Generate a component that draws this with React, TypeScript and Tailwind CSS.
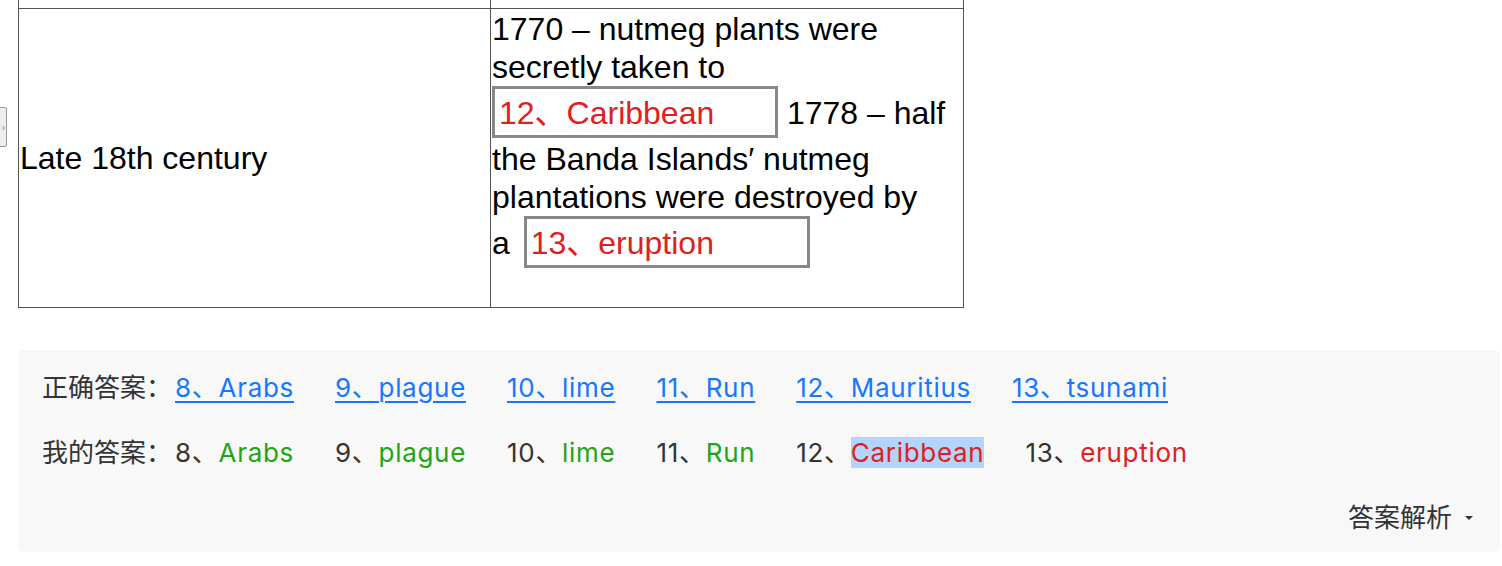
import React from "react";

const correct = ["8、Arabs", "9、plague", "10、lime", "11、Run", "12、Mauritius", "13、tsunami"];

const mine = [
  { n: "8、", a: "Arabs", ok: true },
  { n: "9、", a: "plague", ok: true },
  { n: "10、", a: "lime", ok: true },
  { n: "11、", a: "Run", ok: true },
  { n: "12、", a: "Caribbean", ok: false, sel: true },
  { n: "13、", a: "eruption", ok: false },
];

function Blank({ text, className = "" }: { text: string; className?: string }) {
  return (
    <span
      className={
        "inline-block w-[286px] h-[52px] mb-[2px] border-[3px] border-[#888] px-[4px] align-baseline text-[#e02020] leading-[48px] whitespace-nowrap " +
        className
      }
    >
      {text}
    </span>
  );
}

export default function App() {
  return (
    <div className="relative min-h-[566px] bg-white text-black overflow-hidden">
      {/* side handle */}
      <div className="absolute left-[-10px] top-[107px] w-[17px] h-[40px] border border-[#999] bg-[#eee] rounded-[2px] flex items-center justify-end pr-[1px] text-[10px] text-[#999]">
        ›
      </div>

      <table
        className="ml-[18px] border-collapse w-[946px] text-[32px] leading-[38px]"
        style={{ fontFamily: '"Liberation Sans", Arial, "Noto Sans CJK SC", sans-serif' }}
      >
        <tbody>
          <tr>
            <td className="w-[472px] h-[8px] border border-t-0 border-[#555] p-0"></td>
            <td className="h-[8px] border border-t-0 border-[#555] p-0"></td>
          </tr>
          <tr>
            <td className="w-[472px] border border-[#555] p-[1px] align-middle">Late 18th century</td>
            <td className="border border-[#555] p-[1px] align-top">
              1770 – nutmeg plants were secretly taken to <Blank text="12、Caribbean" /> 1778 – half the Banda
              Islands′ nutmeg plantations were destroyed by{" "}
              <span className="whitespace-nowrap">
                a <Blank text="13、eruption" className="ml-[5px]" />
              </span>
              <div className="h-[36px]"></div>
            </td>
          </tr>
        </tbody>
      </table>

      <div
        className="ml-[18px] mt-[42px] w-[1482px] bg-[#f8f8f8] rounded-[5px] pl-[24px] pr-[26px] pt-[20px] pb-[16px] text-[26px] leading-[36px] text-[#333]"
        style={{ fontFamily: 'Inter, "Noto Sans CJK SC", sans-serif' }}
      >
        <div className="flex items-center whitespace-nowrap">
          <span className="mr-[3px]">正确答案：</span>
          {correct.map((c) => (
            <a key={c} className="mr-[41px] tracking-[0.7px] text-[#1677ff] underline underline-offset-[4px] decoration-[2px]">
              {c}
            </a>
          ))}
        </div>
        <div className="flex items-center whitespace-nowrap mt-[29px]">
          <span className="mr-[3px]">我的答案：</span>
          {mine.map((m) => (
            <span key={m.n} className="mr-[41px] tracking-[0.7px]">
              {m.n}
              <span className={(m.ok ? "text-[#22a514]" : "text-[#e02020]") + (m.sel ? " bg-[#b3d4fc]" : "")}>{m.a}</span>
            </span>
          ))}
        </div>
        <div className="flex justify-end items-center mt-[29px]">
          <span>答案解析</span>
          <svg width="10" height="6" viewBox="0 0 10 6" className="ml-[12px]">
            <path d="M1 1 L9 1 L5 5 Z" fill="#333" />
          </svg>
        </div>
      </div>
    </div>
  );
}
